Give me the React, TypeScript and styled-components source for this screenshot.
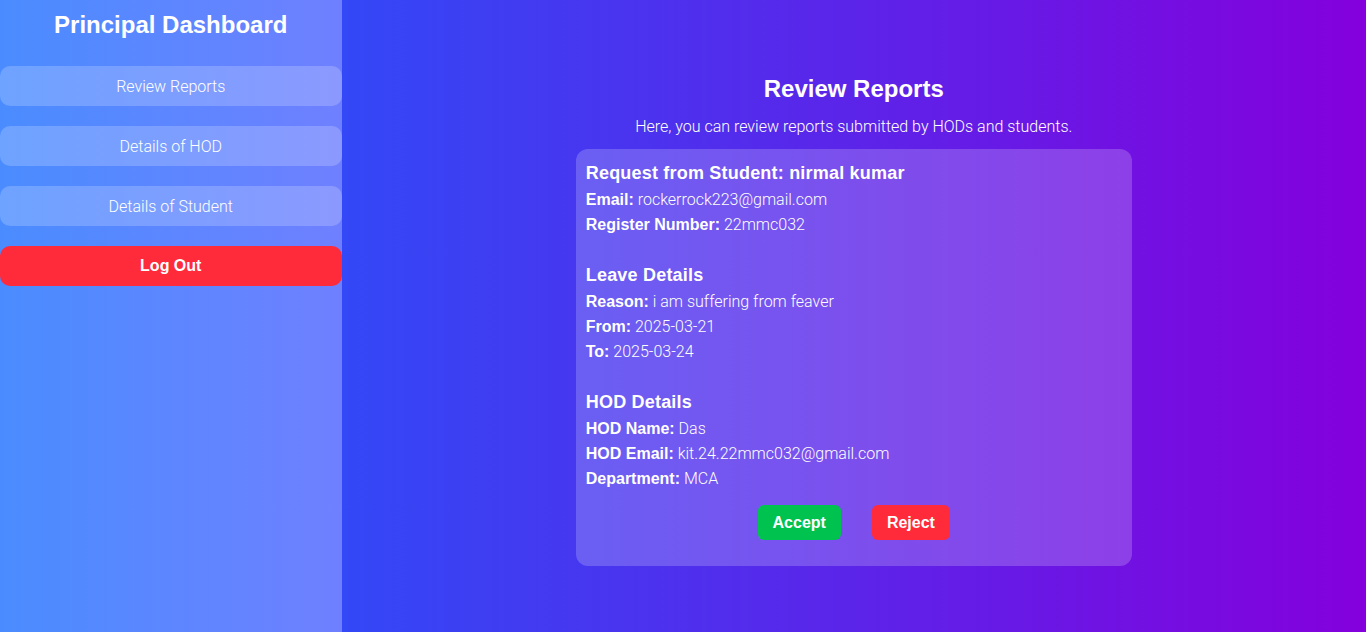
import React from "react";
import styled, { createGlobalStyle } from "styled-components";

const GlobalStyle = createGlobalStyle`
  html, body {
    margin: 0;
    padding: 0;
    height: 100%;
  }
  body {
    font-family: "Liberation Sans", Arial, sans-serif;
    color: #fff;
  }
  #root {
    height: 100%;
  }
`;

const lightFont = `"Roboto", "Liberation Sans", Arial, sans-serif`;

const Layout = styled.div`
  display: flex;
  height: 632px;
  background: linear-gradient(to right, #1860ff, #8400dc);
`;

const Sidebar = styled.aside`
  width: 25%;
  flex-shrink: 0;
  display: flex;
  flex-direction: column;
  gap: 20px;
  background: linear-gradient(to right, #4a8cff, #6f80ff);
`;

const SideTitle = styled.h2`
  margin: 10px 0 6px;
  font-size: 24px;
  font-weight: 700;
  text-align: center;
  line-height: 30px;
`;

const NavButton = styled.button<{ danger?: boolean }>`
  height: 40px;
  width: 100%;
  border: none;
  border-radius: 10px;
  font-size: 16px;
  color: #fff;
  cursor: pointer;
  font-family: ${p => (p.danger ? "inherit" : lightFont)};
  font-weight: ${p => (p.danger ? 700 : 300)};
  background: ${p => (p.danger ? "#ff2a3a" : "rgba(255, 255, 255, 0.2)")};
`;

const Main = styled.main`
  flex: 1;
  display: flex;
  flex-direction: column;
  align-items: center;
  padding-top: 74px;
`;

const Heading = styled.h2`
  margin: 0;
  font-size: 24px;
  line-height: 30px;
  font-weight: 700;
`;

const Intro = styled.p`
  margin: 13px 0 12px;
  font-family: ${lightFont};
  font-size: 16px;
  line-height: 20px;
  font-weight: 300;
`;

const Card = styled.section`
  width: 536px;
  padding: 10px 10px 26px;
  border-radius: 12px;
  background: rgba(255, 255, 255, 0.2);
`;

const Section = styled.div`
  & + & {
    margin-top: 24px;
  }
`;

const SectionTitle = styled.h3`
  margin: 0;
  font-size: 18px;
  line-height: 28px;
  font-weight: 700;
  letter-spacing: 0.2px;
`;

const Line = styled.p`
  margin: 0;
  font-family: ${lightFont};
  font-size: 16px;
  line-height: 25px;
  font-weight: 300;

  strong {
    font-family: "Liberation Sans", Arial, sans-serif;
    font-weight: 700;
  }
`;

const Actions = styled.div`
  display: flex;
  justify-content: center;
  gap: 31px;
  margin-top: 14px;
`;

const ActionButton = styled.button<{ tone: "accept" | "reject" }>`
  height: 35px;
  padding: 0 15px;
  border: none;
  border-radius: 6px;
  font-family: inherit;
  font-size: 16px;
  font-weight: 700;
  color: #fff;
  cursor: pointer;
  background: ${p => (p.tone === "accept" ? "#00c24f" : "#ff2a3a")};
`;

const report = {
  student: "nirmal kumar",
  email: "rockerrock223@gmail.com",
  regNo: "22mmc032",
  reason: "i am suffering from feaver",
  from: "2025-03-21",
  to: "2025-03-24",
  hodName: "Das",
  hodEmail: "kit.24.22mmc032@gmail.com",
  department: "MCA"
};

export default function App() {
  return (
    <>
      <GlobalStyle />
      <Layout>
        <Sidebar>
          <SideTitle>Principal Dashboard</SideTitle>
          <NavButton>Review Reports</NavButton>
          <NavButton>Details of HOD</NavButton>
          <NavButton>Details of Student</NavButton>
          <NavButton danger>Log Out</NavButton>
        </Sidebar>
        <Main>
          <Heading>Review Reports</Heading>
          <Intro>Here, you can review reports submitted by HODs and students.</Intro>
          <Card>
            <Section>
              <SectionTitle>Request from Student: {report.student}</SectionTitle>
              <Line><strong>Email:</strong> {report.email}</Line>
              <Line><strong>Register Number:</strong> {report.regNo}</Line>
            </Section>
            <Section>
              <SectionTitle>Leave Details</SectionTitle>
              <Line><strong>Reason:</strong> {report.reason}</Line>
              <Line><strong>From:</strong> {report.from}</Line>
              <Line><strong>To:</strong> {report.to}</Line>
            </Section>
            <Section>
              <SectionTitle>HOD Details</SectionTitle>
              <Line><strong>HOD Name:</strong> {report.hodName}</Line>
              <Line><strong>HOD Email:</strong> {report.hodEmail}</Line>
              <Line><strong>Department:</strong> {report.department}</Line>
            </Section>
            <Actions>
              <ActionButton tone="accept">Accept</ActionButton>
              <ActionButton tone="reject">Reject</ActionButton>
            </Actions>
          </Card>
        </Main>
      </Layout>
    </>
  );
}
